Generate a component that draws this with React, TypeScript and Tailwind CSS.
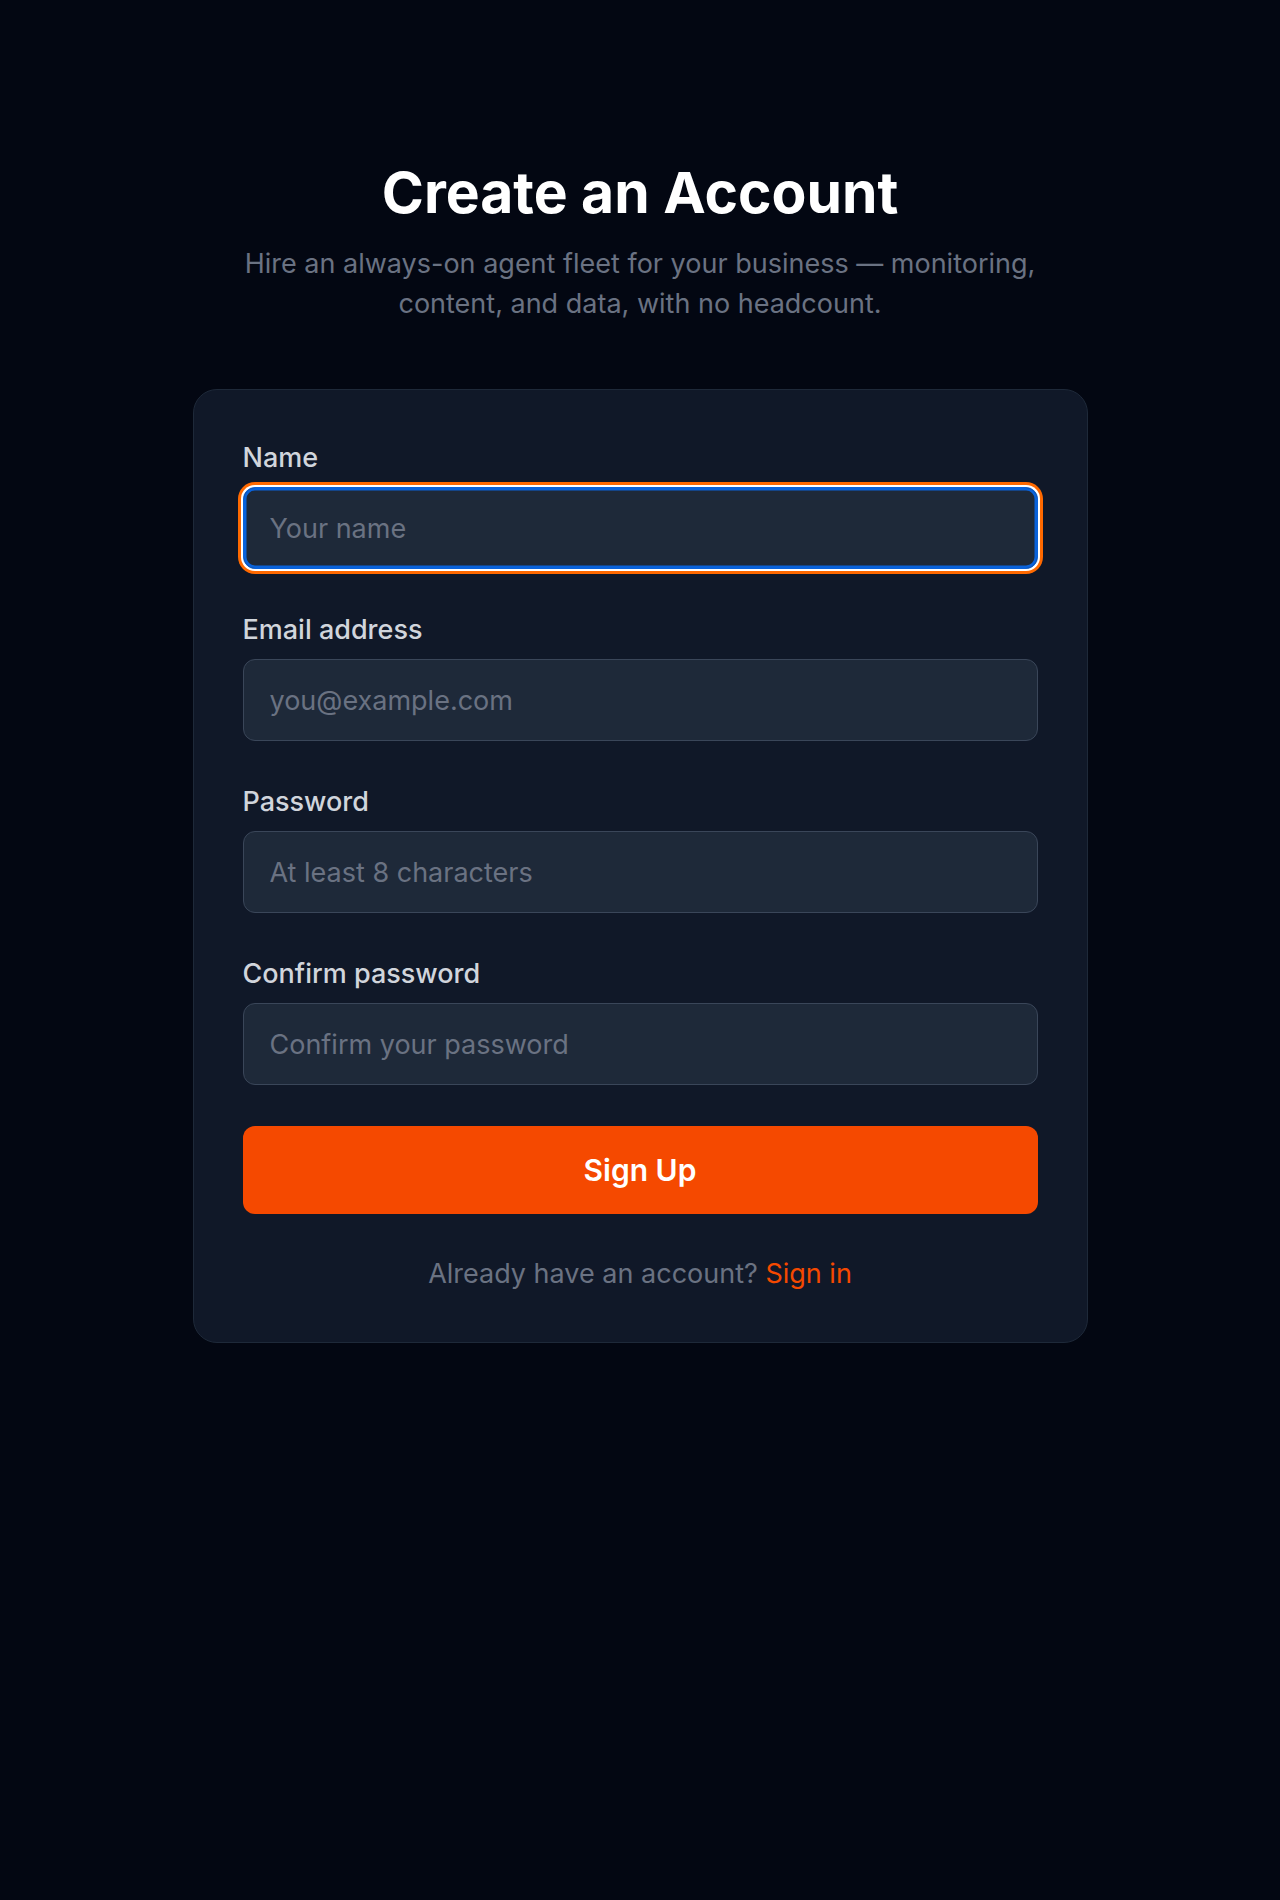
import { useState } from "react";

interface FieldProps {
  label: string;
  type: string;
  placeholder: string;
  focused?: boolean;
  value: string;
  onChange: (v: string) => void;
}

function Field({ label, type, placeholder, focused, value, onChange }: FieldProps) {
  return (
    <div className="flex flex-col">
      <label className="mb-[9px] text-[27px] leading-[40px] font-medium text-[#d1d5dc]">
        {label}
      </label>
      <input
        type={type}
        value={value}
        placeholder={placeholder}
        onChange={(e) => onChange(e.target.value)}
        className={
          focused
            ? "h-[82px] w-full rounded-xl border border-[#0a62da] bg-[#1e2939] px-[26px] text-[27px] text-white outline-none placeholder:text-[#6a7282] shadow-[inset_0_0_0_2.5px_#0a62da,0_0_0_2px_#ffffff,0_0_0_5px_#ff6900]"
            : "h-[82px] w-full rounded-xl border border-[#3a4659] bg-[#1e2939] px-[26px] text-[27px] text-white outline-none placeholder:text-[#6a7282]"
        }
      />
    </div>
  );
}

export default function App() {
  const [name, setName] = useState("");
  const [email, setEmail] = useState("");
  const [password, setPassword] = useState("");
  const [confirm, setConfirm] = useState("");

  return (
    <div className="min-h-screen bg-[#030712] font-['Inter',sans-serif] pt-[157px]">
      <div className="flex flex-col items-center">
        <h1 className="text-[57px] leading-[72px] font-bold text-white">Create an Account</h1>
        <p className="mt-[15px] max-w-[864px] text-center text-[27px] leading-[40px] text-[#6a7282]">
          Hire an always-on agent fleet for your business — monitoring, content, and data, with no
          headcount.
        </p>

        <div className="mt-[65px] w-[895px] rounded-3xl border border-[#1e2939] bg-[#101828] px-[49px] pt-[48px] pb-[48px]">
          <form className="flex flex-col gap-[41px]" onSubmit={(e) => e.preventDefault()}>
            <Field label="Name" type="text" placeholder="Your name" focused value={name} onChange={setName} />
            <Field
              label="Email address"
              type="email"
              placeholder="you@example.com"
              value={email}
              onChange={setEmail}
            />
            <Field
              label="Password"
              type="password"
              placeholder="At least 8 characters"
              value={password}
              onChange={setPassword}
            />
            <Field
              label="Confirm password"
              type="password"
              placeholder="Confirm your password"
              value={confirm}
              onChange={setConfirm}
            />
            <button
              type="submit"
              className="h-[88px] w-full rounded-xl bg-[#f54900] text-[30px] font-semibold text-white"
            >
              Sign Up
            </button>
          </form>

          <p className="mt-[40px] text-center text-[27px] leading-[40px] text-[#6a7282]">
            Already have an account?{" "}
            <a href="#" className="text-[#f54900]">
              Sign in
            </a>
          </p>
        </div>
      </div>
    </div>
  );
}
